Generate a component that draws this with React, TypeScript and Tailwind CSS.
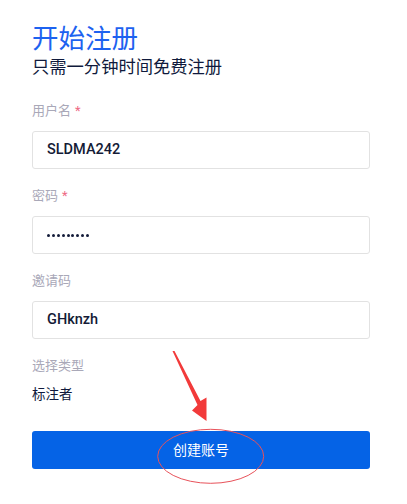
import React from "react";

const font = { fontFamily: 'Roboto, "Noto Sans CJK SC", sans-serif' };

function Field({ label, required, value, password }: { label: string; required?: boolean; value: string; password?: boolean }) {
  return (
    <div className="flex flex-col">
      <div className="text-[13px] leading-[20px] text-[#a9a8b8]">
        {label}
        {required && <span className="ml-[4px] text-[#ee6a85]">*</span>}
      </div>
      <div className="mt-[10px] h-[38px] rounded-[3px] border-[1.5px] border-[#e2e2e2] bg-white flex items-center pl-[14px]">
        {password ? (
          <span className="flex gap-[1.9px] items-center">
            {Array.from({ length: 9 }).map((_, i) => (
              <span key={i} className="block w-[3px] h-[3px] rounded-full bg-[#141c3a]" />
            ))}
          </span>
        ) : (
          <span className="text-[14.5px] font-medium text-[#141b36] leading-none">{value}</span>
        )}
      </div>
    </div>
  );
}

export default function App() {
  return (
    <div className="relative w-[407px] h-[504px] bg-white overflow-hidden" style={font}>
      <div className="pl-[32px] w-[370px] pt-[24px] flex flex-col">
        <div className="text-[26.5px] leading-[30px] text-[#1d62f0]">开始注册</div>
        <div className="mt-[2px] text-[17.3px] leading-[22px] text-[#101a3c]">只需一分钟时间免费注册</div>
        <div className="mt-[23px] flex flex-col gap-[17px]">
          <Field label="用户名" required value="SLDMA242" />
          <Field label="密码" required value="" password />
          <Field label="邀请码" value="GHknzh" />
          <div className="flex flex-col">
            <div className="text-[13px] leading-[20px] text-[#a9a8b8]">选择类型</div>
            <div className="mt-[8px] text-[13.5px] leading-[20px] text-[#101a3c]">标注者</div>
          </div>
        </div>
        <button className="mt-[27px] h-[38px] w-full rounded-[3px] bg-[#0563e6] text-white text-[14px] flex items-center justify-center">
          创建账号
        </button>
      </div>
      <svg className="absolute left-0 top-0 pointer-events-none" width="407" height="504" viewBox="0 0 407 504">
        <polygon points="172.5,351 174.5,351 200.5,401 206.5,397.5 206.5,421 192,410.5 197.5,405" fill="#f23a3a" />
        <ellipse cx="210.7" cy="456.3" rx="53" ry="27" fill="none" stroke="#e8525a" strokeWidth="1" />
      </svg>
    </div>
  );
}
